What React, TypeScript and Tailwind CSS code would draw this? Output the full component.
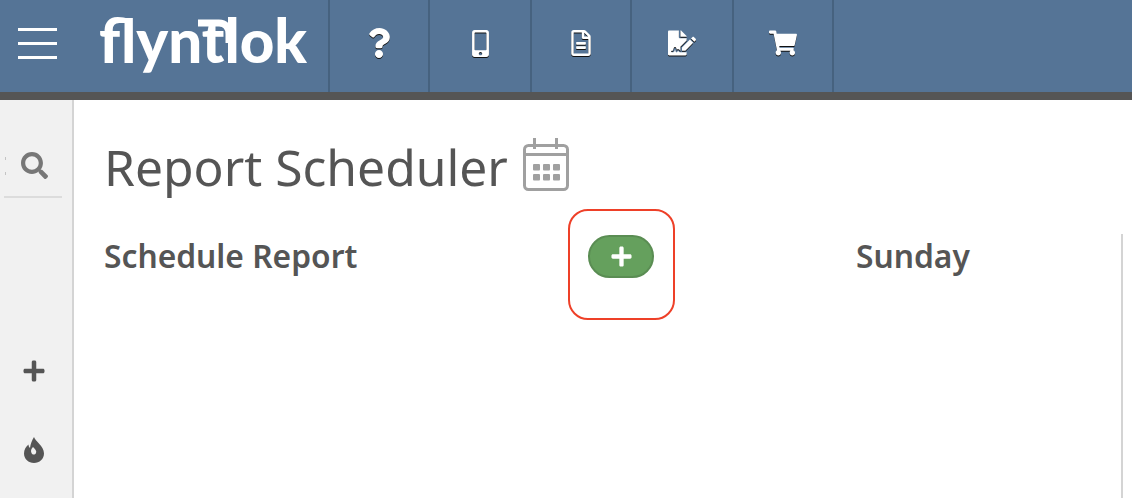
import React from "react";
import { FaQuestion, FaMobileAlt, FaRegFileAlt, FaFileSignature, FaShoppingCart, FaSearch, FaPlus } from "react-icons/fa";

function NavCell({ w, children }: { w: string; children: React.ReactNode }) {
  return (
    <div className={`${w} h-full flex items-center justify-center border-r-2 border-[#46627f] text-white pb-[6px]`}>
      <span className="[filter:drop-shadow(0_1px_0_#111)]">{children}</span>
    </div>
  );
}

function Calendar() {
  return (
    <svg width="46" height="53" viewBox="0 0 46 53" fill="none">
      <rect x="1.5" y="7.5" width="43" height="44" rx="4" stroke="#a0a0a0" strokeWidth="3" />
      <rect x="1.5" y="15" width="43" height="3" fill="#a0a0a0" />
      <rect x="10" y="0" width="3" height="11" fill="#a0a0a0" />
      <rect x="32" y="0" width="3" height="11" fill="#a0a0a0" />
      {[10, 20, 30].map((x) => (
        <g key={x}>
          <rect x={x} y="26" width="7" height="6.5" rx="1" fill="#a0a0a0" />
          <rect x={x} y="36" width="7" height="6.5" rx="1" fill="#a0a0a0" />
        </g>
      ))}
    </svg>
  );
}

function Flame() {
  return (
    <svg width="20" height="26" viewBox="0 0 20 26">
      <path
        fill="#555555"
        fillRule="evenodd"
        d="M10 0 C11 4 20 9 20 16.5 C20 22 15.5 26 10 26 C4.5 26 0 22 0 16.5 C0 12.5 2 9.5 4.5 7.5 C4.5 9 5 10 6 11 C6.5 7 8 3 10 0 Z M9 10 C7 12 6.5 14 7.5 16 C8.5 18 11 18 12 16 C13 14 11 12 9 10 Z"
      />
    </svg>
  );
}

export default function App() {
  return (
    <div className="w-[1132px] h-[498px] overflow-hidden flex flex-col bg-white font-['Noto_Sans','Open_Sans',sans-serif] text-[#555555]">
      <header className="h-[100px] shrink-0 flex bg-[#557496] border-b-8 border-[#555555]">
        <div className="w-[330px] h-full flex items-center border-r-2 border-[#46627f] pb-[6px]">
          <div className="ml-[18px] w-[39px] flex flex-col gap-[11px]">
            <div className="h-[3px] bg-white" />
            <div className="h-[3px] bg-white" />
            <div className="h-[3px] bg-white" />
          </div>
          <span className="relative ml-[42px] text-[60px] leading-none font-black tracking-[0px] text-white font-['Lato',sans-serif] -mt-[6px]">
            flyntlok
            <svg className="absolute left-[98px] top-[9px]" width="40" height="24" viewBox="0 0 40 24" fill="none">
              <path d="M1 4 H22 C28 4 32 8 32 15 V24" stroke="#ffffff" strokeWidth="7" />
            </svg>
          </span>
        </div>
        <NavCell w="w-[100px]"><FaQuestion size={30} /></NavCell>
        <NavCell w="w-[102px]"><FaMobileAlt size={27} /></NavCell>
        <NavCell w="w-[100px]"><FaRegFileAlt size={26} /></NavCell>
        <NavCell w="w-[102px]"><FaFileSignature size={28} /></NavCell>
        <NavCell w="w-[100px]"><FaShoppingCart size={28} /></NavCell>
      </header>
      <div className="flex-1 flex min-h-0">
        <aside className="relative w-[74px] shrink-0 bg-[#f1f1f1] border-r-2 border-[#d4d4d4] flex flex-col items-center">
          <div className="absolute left-[5px] top-[57px] h-[3px] w-px bg-[#c4c4c4]" />
          <div className="absolute left-[5px] top-[72px] h-[3px] w-px bg-[#c4c4c4]" />
          <div className="w-[58px] ml-[-6px] h-[98px] pt-[52px] border-b-2 border-[#dcdcdc] flex justify-center pl-[2px] text-[#777777]">
            <FaSearch size={27} />
          </div>
          <div className="mt-[161px] ml-[-4px] text-[#555555]"><FaPlus size={24} /></div>
          <div className="mt-[54px] ml-[-4px]"><Flame /></div>
        </aside>
        <main className="flex-1 min-w-0 pl-[30px] pr-[9px] flex flex-col">
          <div className="flex items-center mt-[36px] h-[64px]">
            <h1 className="text-[49.75px] leading-none font-normal whitespace-nowrap">Report Scheduler</h1>
            <div className="ml-[15px] mt-[-8px]"><Calendar /></div>
          </div>
          <div className="flex flex-1 mt-[9px]">
            <div className="w-[464px] pt-[25px] text-[31.75px] leading-[44px] font-semibold whitespace-nowrap">Schedule Report</div>
            <div className="w-[288px] flex flex-col items-start">
              <div className="w-[107px] h-[111px] border-2 border-[#ee4028] rounded-[20px] flex justify-center pt-[24px] pr-[1px]">
                <button className="w-[66px] h-[43px] rounded-full bg-[#65a05d] border-2 border-[#5a8d53] text-white flex items-center justify-center">
                  <FaPlus size={23} />
                </button>
              </div>
            </div>
            <div className="flex-1 flex">
              <div className="flex-1 pt-[25px] text-[31.75px] leading-[44px] font-semibold">Sunday</div>
              <div className="w-[2px] mt-[25px] bg-[#d4d4d4]" />
            </div>
          </div>
        </main>
      </div>
    </div>
  );
}
